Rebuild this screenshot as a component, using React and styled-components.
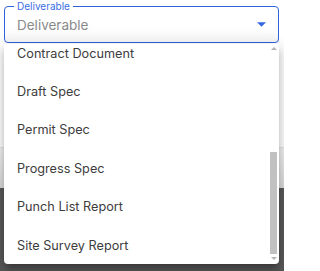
import React, { useLayoutEffect, useRef } from "react";
import styled, { createGlobalStyle } from "styled-components";

const GlobalStyle = createGlobalStyle`
  html, body {
    margin: 0;
    padding: 0;
    background: #ffffff;
  }
  body {
    font-family: Inter, "Noto Sans", sans-serif;
  }
`;

const options = [
  "As-Built Drawing",
  "Bid Document",
  "Change Order",
  "Closeout Report",
  "Construction Schedule",
  "Contract Document",
  "Draft Spec",
  "Permit Spec",
  "Progress Spec",
  "Punch List Report",
  "Site Survey Report",
];

const App = () => {
  const listRef = useRef(null);

  // menu opens scrolled to the end of the list
  useLayoutEffect(() => {
    if (listRef.current) listRef.current.scrollTop = listRef.current.scrollHeight;
  }, []);

  return (
    <>
      <GlobalStyle />
      <Page>
        <Field>
          <Outline>
            <Legend>Deliverable</Legend>
          </Outline>
          <Placeholder>Deliverable</Placeholder>
          <Caret viewBox="0 0 10 5">
            <path d="M0 0 L10 0 L5 5 Z" fill="#3568e0" />
          </Caret>
        </Field>
        <Backdrop>
          <WhiteArea />
          <Rule />
          <GreyBand />
          <DarkArea />
        </Backdrop>
        <Menu>
          <List ref={listRef}>
            {options.map((option) => (
              <Item key={option}>{option}</Item>
            ))}
          </List>
          <Scrollbar>
            <Arrow viewBox="0 0 6 3">
              <path d="M0 3 L6 3 L3 0 Z" fill="#b4b4b4" />
            </Arrow>
            <Track>
              <Thumb />
            </Track>
            <Arrow viewBox="0 0 6 3">
              <path d="M0 0 L6 0 L3 3 Z" fill="#b4b4b4" />
            </Arrow>
          </Scrollbar>
        </Menu>
      </Page>
    </>
  );
};

const Page = styled.div`
  position: relative;
  width: 284px;
  height: 271px;
  overflow: hidden;
  display: flex;
  flex-direction: column;
  background: #ffffff;
`;

const Field = styled.div`
  position: relative;
  margin: 0 5px 0 4px;
  height: 43px;
  display: flex;
  align-items: center;
  padding: 6px 13px 0;
  box-sizing: border-box;
  background: linear-gradient(#ffffff 60%, #f5f5f5);
`;

const Outline = styled.fieldset`
  position: absolute;
  top: 0;
  left: 0;
  right: 0;
  bottom: 0;
  margin: 0;
  padding: 0 9px;
  border: 1px solid #2f63dd;
  border-radius: 4px;
  pointer-events: none;
`;

const Legend = styled.legend`
  padding: 0 3px;
  font-size: 10px;
  line-height: 12px;
  color: #3a6ee6;
`;

const Placeholder = styled.span`
  flex: 1;
  font-size: 13.5px;
  color: #8a8a8a;
`;

const Caret = styled.svg`
  width: 9px;
  height: 5px;
`;

const Backdrop = styled.div`
  flex: 1;
  display: flex;
  flex-direction: column;
`;

const WhiteArea = styled.div`
  height: 104px;
`;

const Rule = styled.div`
  height: 1px;
  background: #e4e4e4;
`;

const GreyBand = styled.div`
  height: 40px;
  background: linear-gradient(#f2f2f2, #dadada);
`;

const DarkArea = styled.div`
  flex: 1;
  background: #595959;
`;

const Menu = styled.div`
  position: absolute;
  top: 44px;
  left: 4px;
  width: 275px;
  height: 220px;
  display: flex;
  background: #ffffff;
  border-radius: 0 0 4px 4px;
  box-shadow: 0 5px 5px -3px rgba(0, 0, 0, 0.2), 0 8px 10px 1px rgba(0, 0, 0, 0.14),
    0 3px 14px 2px rgba(0, 0, 0, 0.12);
`;

const List = styled.ul`
  flex: 1;
  margin: 0;
  padding: 0;
  list-style: none;
  overflow-y: auto;
  scrollbar-width: none;
`;

const Item = styled.li`
  height: 38.4px;
  display: flex;
  align-items: center;
  padding: 0 13px;
  font-size: 12.7px;
  color: #3d3d3d;
`;

const Scrollbar = styled.div`
  width: 7px;
  margin-right: 2px;
  display: flex;
  flex-direction: column;
  align-items: center;
  padding: 3px 0 4px;
  gap: 3px;
`;

const Arrow = styled.svg`
  width: 6px;
  height: 3px;
`;

const Track = styled.div`
  flex: 1;
  align-self: stretch;
  display: flex;
  flex-direction: column;
  justify-content: flex-end;
`;

const Thumb = styled.div`
  height: 102px;
  background: #c1c1c1;
`;

export default App;
